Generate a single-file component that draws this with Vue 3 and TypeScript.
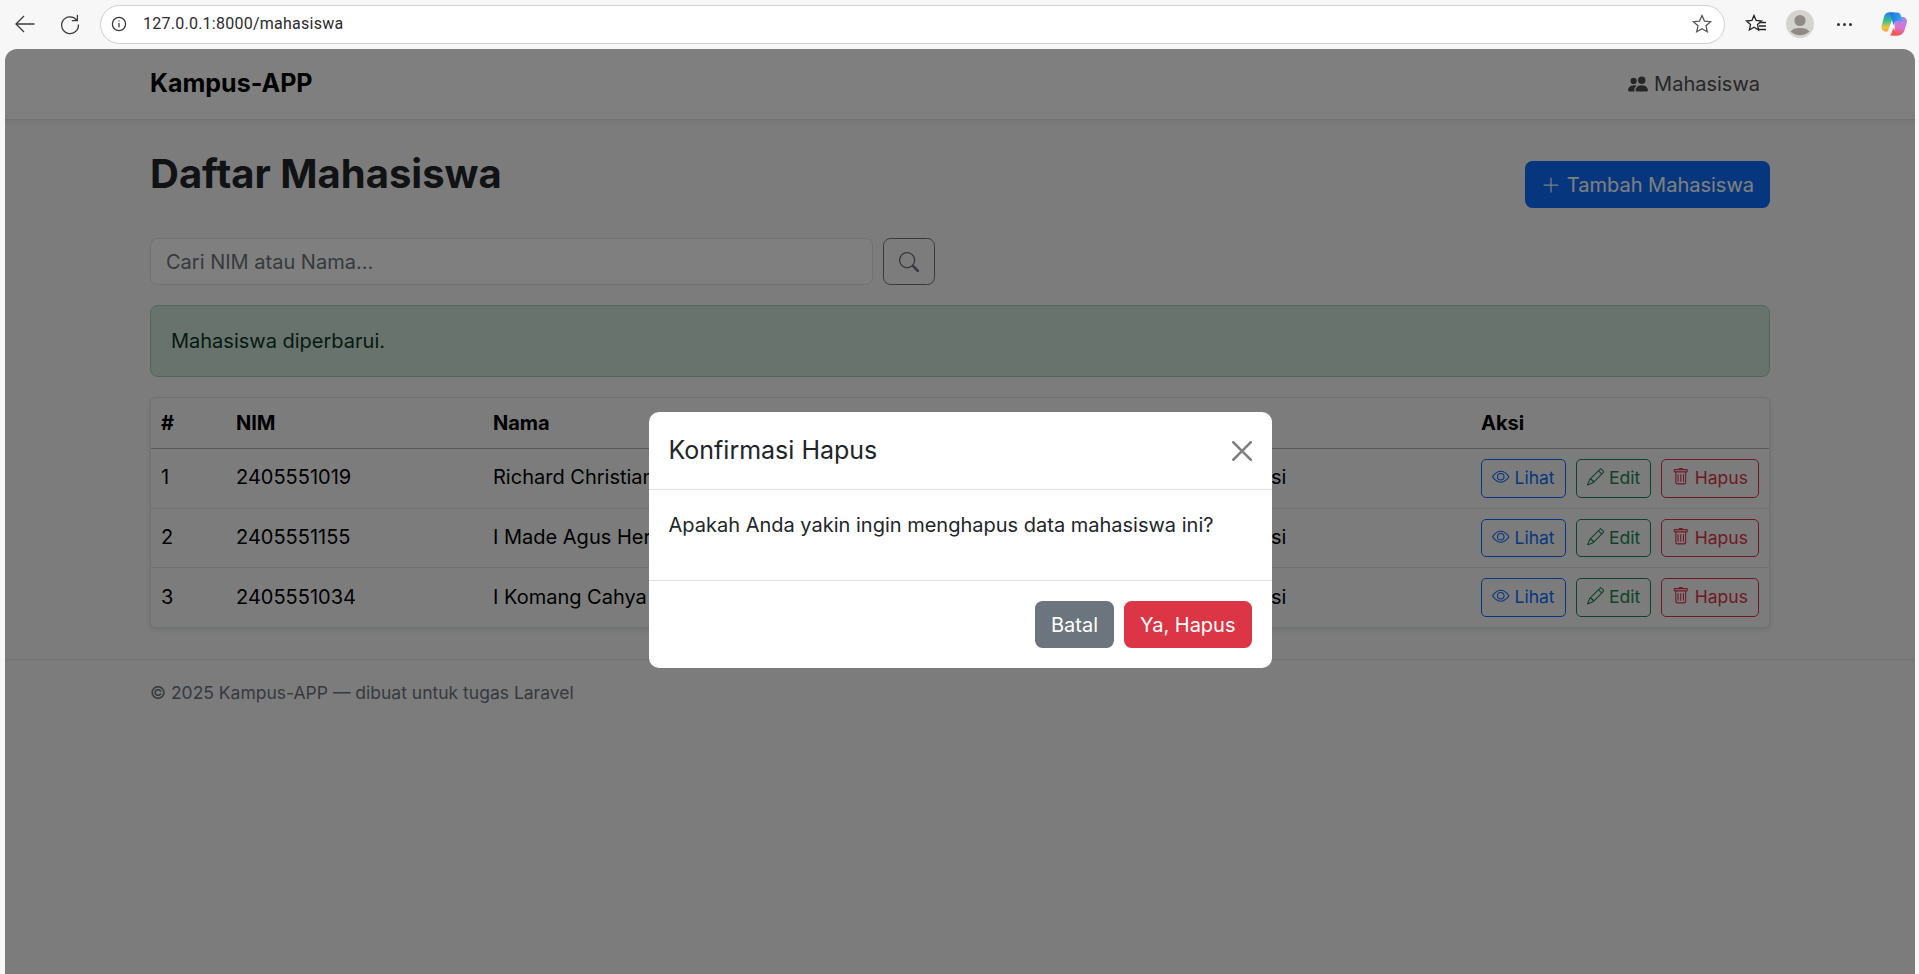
<script setup lang="ts">
const students = [
  { id: 1, nim: '2405551019', name: 'Richard Christian', prodi: 'Teknologi Informasi' },
  { id: 2, nim: '2405551155', name: 'I Made Agus Hermawan', prodi: 'Teknologi Informasi' },
  { id: 3, nim: '2405551034', name: 'I Komang Cahya', prodi: 'Teknologi Informasi' },
]

const icons = {
  people:
    'M7 14s-1 0-1-1 1-4 5-4 5 3 5 4-1 1-1 1zm4-6a3 3 0 1 0 0-6 3 3 0 0 0 0 6m-5.784 6A2.24 2.24 0 0 1 5 13c0-1.355.68-2.75 1.936-3.72A6.3 6.3 0 0 0 5 9c-4 0-5 3-5 4s1 1 1 1zM4.5 8a2.5 2.5 0 1 0 0-5 2.5 2.5 0 0 0 0 5',
  plus: 'M8 2a.5.5 0 0 1 .5.5v5h5a.5.5 0 0 1 0 1h-5v5a.5.5 0 0 1-1 0v-5h-5a.5.5 0 0 1 0-1h5v-5A.5.5 0 0 1 8 2',
  search:
    'M11.742 10.344a6.5 6.5 0 1 0-1.397 1.398h-.001q.044.06.098.115l3.85 3.85a1 1 0 0 0 1.415-1.414l-3.85-3.85a1 1 0 0 0-.115-.1zM12 6.5a5.5 5.5 0 1 1-11 0 5.5 5.5 0 0 1 11 0',
  eye: 'M16 8s-3-5.5-8-5.5S0 8 0 8s3 5.5 8 5.5S16 8 16 8M1.173 8a13 13 0 0 1 1.66-2.043C4.12 4.668 5.88 3.5 8 3.5s3.879 1.168 5.168 2.457A13 13 0 0 1 14.828 8q-.086.13-.195.288c-.335.48-.83 1.12-1.465 1.755C11.879 11.332 10.119 12.5 8 12.5s-3.879-1.168-5.168-2.457A13 13 0 0 1 1.172 8zM8 5.5a2.5 2.5 0 1 0 0 5 2.5 2.5 0 0 0 0-5M4.5 8a3.5 3.5 0 1 1 7 0 3.5 3.5 0 0 1-7 0',
  pencil:
    'M12.146.146a.5.5 0 0 1 .708 0l3 3a.5.5 0 0 1 0 .708l-10 10a.5.5 0 0 1-.168.11l-5 2a.5.5 0 0 1-.65-.65l2-5a.5.5 0 0 1 .11-.168zM11.207 2.5 13.5 4.793 14.793 3.5 12.5 1.207zm1.586 3L10.5 3.207 4 9.707V10h.5a.5.5 0 0 1 .5.5v.5h.5a.5.5 0 0 1 .5.5v.5h.293zm-9.761 5.175-.106.106-1.528 3.821 3.821-1.528.106-.106A.5.5 0 0 1 5 12.5V12h-.5a.5.5 0 0 1-.5-.5V11h-.5a.5.5 0 0 1-.468-.325',
  trash:
    'M5.5 5.5A.5.5 0 0 1 6 6v6a.5.5 0 0 1-1 0V6a.5.5 0 0 1 .5-.5m2.5 0a.5.5 0 0 1 .5.5v6a.5.5 0 0 1-1 0V6a.5.5 0 0 1 .5-.5m3 .5a.5.5 0 0 0-1 0v6a.5.5 0 0 0 1 0zM14.5 3a1 1 0 0 1-1 1H13v9a2 2 0 0 1-2 2H5a2 2 0 0 1-2-2V4h-.5a1 1 0 0 1-1-1V2a1 1 0 0 1 1-1H6a1 1 0 0 1 1-1h2a1 1 0 0 1 1 1h3.5a1 1 0 0 1 1 1zM4.118 4 4 4.059V13a1 1 0 0 0 1 1h6a1 1 0 0 0 1-1V4.059L11.882 4zM2.5 3h11V2h-11z',
  close:
    'M.293.293a1 1 0 0 1 1.414 0L8 6.586 14.293.293a1 1 0 1 1 1.414 1.414L9.414 8l6.293 6.293a1 1 0 0 1-1.414 1.414L8 9.414l-6.293 6.293a1 1 0 0 1-1.414-1.414L6.586 8 .293 1.707a1 1 0 0 1 0-1.414',
}

const actions = [
  { label: 'Lihat', icon: icons.eye, cls: 'act-blue' },
  { label: 'Edit', icon: icons.pencil, cls: 'act-green' },
  { label: 'Hapus', icon: icons.trash, cls: 'act-red' },
]
</script>

<template>
  <div class="window">
    <div class="browser">
      <svg class="chrome-icon back" width="24" height="24" viewBox="0 0 24 24">
        <path d="M21.5 12H3M11 4 3 12l8 8" />
      </svg>
      <svg class="chrome-icon reload" width="24" height="24" viewBox="0 0 24 24">
        <path d="M18.6 8A8.4 8.4 0 1 0 20.4 12.5M19.4 3v5.6h-5.6" />
      </svg>
      <div class="address">
        <svg class="chrome-icon" width="18" height="18" viewBox="0 0 18 18">
          <circle cx="9" cy="9" r="6.6" />
          <path d="M9 8v4.2M9 5.4v1.2" />
        </svg>
        <span class="url">127.0.0.1:8000/mahasiswa</span>
        <svg class="chrome-icon star" width="22" height="22" viewBox="0 0 22 22">
          <path d="M11 2.5l2.5 5.6 6.1.6-4.6 4.1 1.3 6-5.3-3.1-5.3 3.1 1.3-6-4.6-4.1 6.1-.6z" />
        </svg>
      </div>
      <svg class="chrome-icon favs" width="24" height="24" viewBox="0 0 24 24">
        <path class="dark" d="M10 3.500l2.100 5 5.400.5-4 3.600 1.100 5.400L10 15.200 5.400 18l1.100-5.400-4-3.600 5.400-.5z" />
        <path class="dark" d="M16 10.500h6M15 14h7M14 17.500h8" />
      </svg>
      <svg class="avatar" width="28" height="28" viewBox="0 0 28 28">
        <circle cx="14" cy="14" r="14" fill="#d5d3cf" />
        <circle cx="14" cy="10.500" r="5.600" fill="#8f8a85" />
        <path d="M4.600 21.500c1.600-2.600 5-3.600 9.400-3.600s7.800 1 9.400 3.600a14 14 0 0 1-18.800 0z" fill="#8f8a85" />
      </svg>
      <div class="dots"><i></i><i></i><i></i></div>
      <svg class="copilot" width="28" height="28" viewBox="0 0 28 28">
        <defs>
          <linearGradient id="cpA" x1="0.4" y1="0" x2="0.4" y2="1">
            <stop offset="0" stop-color="#1a86e0" />
            <stop offset="0.45" stop-color="#3cc38a" />
            <stop offset="0.8" stop-color="#f6c63a" />
            <stop offset="1" stop-color="#f59a3c" />
          </linearGradient>
          <linearGradient id="cpB" x1="0.6" y1="0" x2="0.4" y2="1">
            <stop offset="0" stop-color="#a884ee" />
            <stop offset="0.55" stop-color="#d873d6" />
            <stop offset="1" stop-color="#f2574f" />
          </linearGradient>
          <linearGradient id="cpC" x1="0" y1="0" x2="1" y2="0.3">
            <stop offset="0" stop-color="#1668dc" />
            <stop offset="1" stop-color="#35a8ee" />
          </linearGradient>
        </defs>
        <path d="M8.500 2.500h6l-4 11.500-2.800 7.500H6c-3.200 0-5-2.500-4.400-5.300L4 7c.7-2.800 2.200-4.500 4.500-4.500z" fill="url(#cpA)" />
        <path d="M14 7h8.800c2.800 0 4.700 2.600 4 5.400l-2 7c-.8 3.300-3 5.600-6 6h-6.600c1.600-.7 2.300-1.700 2.900-3.300z" fill="url(#cpB)" />
        <path d="M9.500 25.500h7.300l1.500-.2c-1.800-.8-2.600-2-3.300-4l-1.200-3.800-2.300 5.800c-.6 1.300-1 1.900-2 2.200z" fill="#f2574f" />
        <path d="M8.500 2.500h8.300c2.600 0 3.800 1.600 4.600 4.200l1.300 4.300h-6c-1.200 0-1.800.5-2.300 2l-.9 2.500-1.800-6.500C10.800 5.600 10.200 3.300 8.500 2.500z" fill="url(#cpC)" />
      </svg>
    </div>

    <div class="page">
      <header class="navbar">
        <div class="container nav-inner">
          <span class="brand">Kampus-APP</span>
          <span class="nav-link">
            <svg class="bi people" viewBox="0 0 16 16"><path :d="icons.people" /></svg>
            Mahasiswa
          </span>
        </div>
      </header>

      <main class="container main">
        <div class="title-row">
          <h1>Daftar Mahasiswa</h1>
          <button class="btn btn-add">
            <svg class="bi" viewBox="0 0 16 16"><path :d="icons.plus" /></svg>
            Tambah Mahasiswa
          </button>
        </div>

        <div class="search-row">
          <input class="search-input" type="text" placeholder="Cari NIM atau Nama..." />
          <button class="btn btn-search">
            <svg class="bi" viewBox="0 0 16 16"><path :d="icons.search" /></svg>
          </button>
        </div>

        <div class="alert">Mahasiswa diperbarui.</div>

        <div class="table-card">
          <table>
            <colgroup>
              <col style="width: 75px" />
              <col style="width: 257px" />
              <col style="width: 608px" />
              <col style="width: 380px" />
              <col />
            </colgroup>
            <thead>
              <tr>
                <th>#</th>
                <th>NIM</th>
                <th>Nama</th>
                <th>Prodi</th>
                <th>Aksi</th>
              </tr>
            </thead>
            <tbody>
              <tr v-for="s in students" :key="s.id">
                <td>{{ s.id }}</td>
                <td>{{ s.nim }}</td>
                <td>{{ s.name }}</td>
                <td>{{ s.prodi }}</td>
                <td class="cell-actions">
                  <div class="actions">
                    <a v-for="a in actions" :key="a.label" class="act" :class="a.cls">
                      <svg class="bi" viewBox="0 0 16 16"><path :d="a.icon" /></svg>
                      {{ a.label }}
                    </a>
                  </div>
                </td>
              </tr>
            </tbody>
          </table>
        </div>
      </main>

      <footer class="footer">
        <div class="container">© 2025 Kampus-APP — dibuat untuk tugas Laravel</div>
      </footer>

      <div class="backdrop">
        <div class="modal">
          <div class="modal-header">
            <h5>Konfirmasi Hapus</h5>
            <svg class="close" viewBox="0 0 16 16"><path :d="icons.close" /></svg>
          </div>
          <div class="modal-body">Apakah Anda yakin ingin menghapus data mahasiswa ini?</div>
          <div class="modal-footer">
            <button class="btn btn-grey">Batal</button>
            <button class="btn btn-danger">Ya, Hapus</button>
          </div>
        </div>
      </div>
    </div>
  </div>
</template>

<style scoped>
.window {
  display: flex;
  flex-direction: column;
  height: 974px;
  overflow: hidden;
  background: #f7f7f7;
  font-family: Inter, 'Liberation Sans', sans-serif;
  font-size: 20px;
  line-height: 1.5;
  color: #212529;
}

.browser {
  display: flex;
  align-items: center;
  height: 49px;
  flex: none;
  padding: 0 0 1px 13px;
  box-sizing: border-box;
}

.chrome-icon {
  flex: none;
  fill: none;
  stroke: #3c3c3c;
  stroke-width: 1.3;
}

.reload {
  margin-left: 21px;
}

.address {
  display: flex;
  align-items: center;
  width: 1625px;
  height: 39px;
  margin-left: 18px;
  padding: 0 11px 0 9px;
  box-sizing: border-box;
  background: #fff;
  border: 1px solid #cfcfcf;
  border-radius: 20px;
}

.url {
  margin-left: 15px;
  font-family: Roboto, sans-serif;
  font-size: 16px;
  color: #2b2b2b;
  letter-spacing: 0.25px;
}

.star {
  margin-left: auto;
  stroke: #555;
}

.favs {
  margin-left: 19px;
}

.favs .dark {
  stroke: #222;
}

.avatar {
  flex: none;
  margin-left: 18px;
}

.dots {
  display: flex;
  gap: 3px;
  margin-left: 23px;
}

.dots i {
  width: 3px;
  height: 3px;
  border-radius: 50%;
  background: #333;
}

.copilot {
  flex: none;
  margin-left: 28px;
}

.page {
  position: relative;
  flex: 1;
  margin: 0 4px 0 5px;
  overflow: hidden;
  background: #f8f9fa;
  border-radius: 12px 12px 0 0;
}

.container {
  width: 1620px;
  margin: 0 auto;
  box-sizing: border-box;
}

.navbar {
  height: 71px;
  background: #fff;
  border-bottom: 1px solid #dee2e6;
  box-sizing: border-box;
  box-shadow: 0 2px 5px rgba(0, 0, 0, 0.06);
}

.nav-inner {
  display: flex;
  align-items: center;
  justify-content: space-between;
  height: 100%;
}

.brand {
  font-size: 25px;
  font-weight: 700;
  color: #000;
}

.nav-link {
  display: flex;
  align-items: center;
  gap: 6px;
  padding-right: 10px;
  color: #4d4d4d;
}

.bi {
  width: 1em;
  height: 1em;
  flex: none;
  fill: currentColor;
}

.main {
  padding-top: 30px;
}

.title-row {
  display: flex;
  align-items: flex-start;
  justify-content: space-between;
  height: 88px;
}

h1 {
  margin: 0;
  font-size: 40px;
  font-weight: 700;
  line-height: 1.2;
  color: #212529;
}

.btn {
  display: inline-flex;
  align-items: center;
  justify-content: center;
  gap: 6px;
  height: 47px;
  padding: 0 15px;
  font: inherit;
  border: 1px solid transparent;
  border-radius: 7.5px;
  box-sizing: border-box;
}

.btn-add {
  margin-top: 11px;
  background: #0d6efd;
  color: #fff;
}

.search-row {
  display: flex;
  gap: 10px;
  width: 785px;
}

.search-input {
  flex: 1;
  min-width: 0;
  height: 47px;
  padding: 0 15px;
  font: inherit;
  color: #212529;
  background: #fff;
  border: 1px solid #dee2e6;
  border-radius: 7.5px;
  box-sizing: border-box;
}

.search-input::placeholder {
  color: #6c757d;
  opacity: 1;
}

.btn-search {
  width: 52px;
  padding: 0;
  background: transparent;
  border-color: #6c757d;
  color: #6c757d;
}

.alert {
  display: flex;
  align-items: center;
  height: 72px;
  margin-top: 20px;
  padding: 0 20px;
  color: #0a3622;
  background: #d1e7dd;
  border: 1px solid #a3cfbb;
  border-radius: 7.5px;
  box-sizing: border-box;
}

.table-card {
  margin-top: 20px;
  overflow: hidden;
  border: 1px solid #dee2e6;
  border-radius: 5px;
  box-shadow: 0 2px 5px rgba(0, 0, 0, 0.1);
}

table {
  width: 100%;
  table-layout: fixed;
  border-collapse: collapse;
}

th {
  height: 50px;
  padding: 0 10px;
  font-weight: 700;
  text-align: left;
  color: #000;
  border-bottom: 1px solid #adb5bd;
}

td {
  box-sizing: border-box;
  height: 59.5px;
  padding: 0 10px 2px;
  color: #000;
  white-space: nowrap;
  border-bottom: 1px solid #dee2e6;
}

td.cell-actions {
  padding-bottom: 0;
}

tbody tr:last-child td {
  border-bottom: 0;
}

.actions {
  display: flex;
  gap: 10px;
}

.act {
  display: inline-flex;
  align-items: center;
  gap: 5px;
  height: 38.5px;
  padding: 0 10px;
  font-size: 17.5px;
  border: 1px solid currentColor;
  border-radius: 5px;
  box-sizing: border-box;
}

.act .bi {
  margin-top: -3px;
}

.act-blue {
  color: #0d6efd;
}

.act-green {
  color: #198754;
}

.act-red {
  color: #dc3545;
}

.footer {
  margin-top: 31px;
  padding-top: 20px;
  font-size: 17.5px;
  color: #6c757d;
  border-top: 1px solid #dee2e6;
}

.backdrop {
  position: absolute;
  inset: 0;
  display: flex;
  justify-content: center;
  align-items: flex-start;
  background: rgba(0, 0, 0, 0.5);
}

.modal {
  width: 623px;
  margin-top: 363px;
  background: #fff;
  border-radius: 10px;
}

.modal-header {
  display: flex;
  align-items: center;
  justify-content: space-between;
  padding: 20px;
  border-bottom: 1px solid #dee2e6;
}

h5 {
  margin: 0;
  font-size: 25px;
  font-weight: 400;
  line-height: 37px;
}

.close {
  width: 20px;
  height: 20px;
  fill: #000;
  opacity: 0.5;
}

.modal-body {
  padding: 20px 20px 40px;
}

.modal-footer {
  display: flex;
  justify-content: flex-end;
  gap: 10px;
  padding: 20px;
  border-top: 1px solid #dee2e6;
}

.btn-grey {
  background: #6c757d;
  color: #fff;
}

.btn-danger {
  background: #dc3545;
  color: #fff;
}
</style>

<style>
body {
  background: #f7f7f7;
}
</style>
